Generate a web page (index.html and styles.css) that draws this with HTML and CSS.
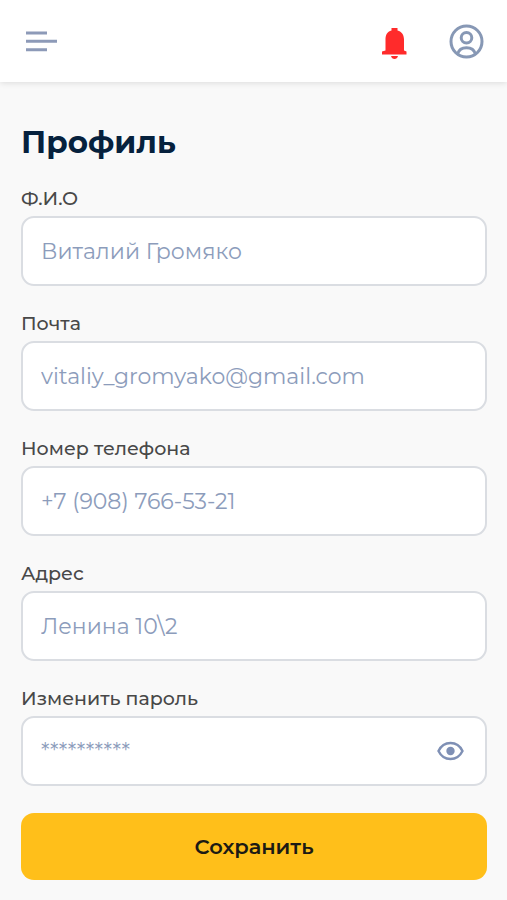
FILE: index.html
```html
<!DOCTYPE html>
<html lang="ru">
  <head>
    <meta charset="UTF-8" />
    <meta name="viewport" content="width=device-width, initial-scale=1.0" />
    <title>Профиль</title>
    <link rel="stylesheet" href="styles.css">
  </head>
  <body>
    <header class="header">
      <button class="icon-btn" type="button" aria-label="Меню">
        <svg width="32" height="22" viewBox="0 0 32 22">
          <path d="M0 3h21M0 11.300h31M0 19.800h21" fill="none" stroke="#8d9ab8" stroke-width="3" />
        </svg>
      </button>
      <div class="header-right">
        <button class="icon-btn" type="button" aria-label="Уведомления">
          <svg width="25" height="38" viewBox="0 -6 25 38">
            <path d="M9.500 0h6v2.500c4.500 1.200 6.500 4.600 6.500 9V22.500l2.500 1v3H0v-3l3.500-1V11.500c0-4.400 1.500-7.800 6-9z" fill="#ff2b2b" />
            <path d="M9 28h7c-.5 2-1.800 3-3.500 3S9.500 30 9 28z" fill="#ff2b2b" />
          </svg>
        </button>
        <button class="icon-btn" type="button" aria-label="Профиль">
          <svg width="35" height="35" viewBox="0 0 35 35" fill="none" stroke="#8798b5" stroke-width="3">
            <circle cx="17.500" cy="17.500" r="15.500" />
            <circle cx="17.500" cy="13.700" r="5.300" />
            <path d="M8.500 30c1.200-4 4.800-6.300 9-6.300s7.800 2.300 9 6.300" />
          </svg>
        </button>
      </div>
    </header>

    <main class="profile">
      <h1 class="title">Профиль</h1>
      <form class="form">
        <div class="field">
          <label for="name">Ф.И.О</label>
          <input id="name" type="text" placeholder="Виталий Громяко" />
        </div>
        <div class="field">
          <label for="email">Почта</label>
          <input id="email" type="email" placeholder="vitaliy_gromyako@gmail.com" />
        </div>
        <div class="field">
          <label for="phone">Номер телефона</label>
          <input id="phone" type="tel" placeholder="+7 (908) 766-53-21" />
        </div>
        <div class="field">
          <label for="address">Адрес</label>
          <input id="address" type="text" placeholder="Ленина 10\2" />
        </div>
        <div class="field">
          <label for="password">Изменить пароль</label>
          <div class="password">
            <input id="password" type="password" placeholder="**********" />
            <button class="icon-btn eye" type="button" aria-label="Показать пароль">
              <svg width="27" height="20" viewBox="0 0 27 20">
                <path d="M1.500 10C4 4.800 8.400 2 13.500 2S23 4.800 25.500 10C23 15.200 18.600 18 13.500 18S4 15.200 1.500 10z" fill="none" stroke="#7f90b5" stroke-width="2.400" />
                <circle cx="13.500" cy="10" r="4.200" fill="#7f90b5" />
              </svg>
            </button>
          </div>
        </div>
        <button class="save" type="submit">Сохранить</button>
      </form>
    </main>
  </body>
</html>
```
FILE: styles.css
```css
* {
  padding: 0;
  margin: 0;
  box-sizing: border-box;
}
body {
  background-color: #f9f9f9;
  font-family: "Montserrat", "Inter", sans-serif;
}
button,
input {
  font-family: inherit;
}

.header {
  display: flex;
  justify-content: space-between;
  align-items: center;
  height: 82px;
  padding: 0 23px 0 26px;
  background-color: #fff;
  box-shadow: 0 1px 6px rgba(0, 0, 0, 0.12);
}
.header-right {
  display: flex;
  align-items: center;
  gap: 42px;
}
.icon-btn {
  display: flex;
  border: none;
  background: none;
  cursor: pointer;
}

.profile {
  padding: 40px 20px 18px 21px;
}
.title {
  margin-bottom: 26px;
  font-size: 31px;
  line-height: 40px;
  font-weight: 700;
  color: #06213d;
}
.form {
  display: flex;
  flex-direction: column;
  gap: 27px;
}
.field {
  display: flex;
  flex-direction: column;
  gap: 6px;
}
.field label {
  font-size: 19px;
  line-height: 22px;
  font-weight: 500;
  color: #484848;
}
.field input {
  width: 100%;
  height: 70px;
  padding: 0 18px;
  border: 2px solid #dadde2;
  border-radius: 13px;
  background-color: #fff;
  font-size: 22px;
  color: #06213d;
}
.field input::placeholder {
  color: #8c9cbb;
  opacity: 1;
}

.password {
  position: relative;
}
.field .password input {
  padding-right: 60px;
}
.eye {
  position: absolute;
  top: 25px;
  right: 23px;
}

.save {
  height: 67px;
  border: none;
  border-radius: 13px;
  background-color: #ffbf1a;
  font-size: 21px;
  font-weight: 600;
  color: #1c1a14;
  cursor: pointer;
}
```
